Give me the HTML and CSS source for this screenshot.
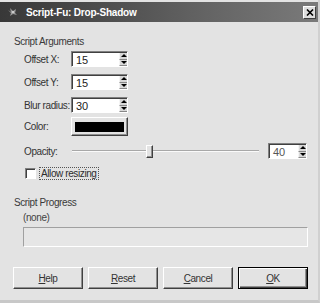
FILE: index.html
```html
<!DOCTYPE html>
<html lang="en">
<head>
    <meta charset="UTF-8">
    <title>Script-Fu: Drop-Shadow</title>
    <link rel="stylesheet" href="styles.css">
</head>
<body>
    <div class="window">
        <div class="titlebar">
            <span class="app-icon">
                <svg width="11" height="10" viewBox="0 0 11 10">
                    <path d="M1 3 L4 5 L3 1 L6 4 L9 2 L8 6 L10 8 L6 7 L3 9 L4 6 Z" fill="#9a9a9a"/>
                    <circle cx="6" cy="5" r="1" fill="#dcdcdc"/>
                </svg>
            </span>
            <span class="title">Script-Fu: Drop-Shadow</span>
            <span class="close">
                <svg width="8" height="7" viewBox="0 0 8 7">
                    <path d="M1 0.5 L7 6.5 M7 0.5 L1 6.5" stroke="#000" stroke-width="1.6"/>
                </svg>
            </span>
        </div>

        <div class="content">
            <div class="section-title">Script Arguments</div>
            <div class="args">
                <div class="row">
                    <label class="lbl">Offset X:</label>
                    <div class="spin">
                        <div class="spin-field">15</div>
                        <div class="spin-btns"><span class="up"></span><span class="down"></span></div>
                    </div>
                </div>
                <div class="row">
                    <label class="lbl">Offset Y:</label>
                    <div class="spin">
                        <div class="spin-field">15</div>
                        <div class="spin-btns"><span class="up"></span><span class="down"></span></div>
                    </div>
                </div>
                <div class="row">
                    <label class="lbl">Blur radius:</label>
                    <div class="spin">
                        <div class="spin-field">30</div>
                        <div class="spin-btns"><span class="up"></span><span class="down"></span></div>
                    </div>
                </div>
                <div class="row row-color">
                    <label class="lbl">Color:</label>
                    <div class="color-btn"><span class="swatch"></span></div>
                </div>
                <div class="row">
                    <label class="lbl">Opacity:</label>
                    <div class="slider">
                        <div class="groove"></div>
                        <div class="thumb"></div>
                    </div>
                    <div class="spin spin-small">
                        <div class="spin-field">40</div>
                        <div class="spin-btns"><span class="up"></span><span class="down"></span></div>
                    </div>
                </div>
                <div class="row row-check">
                    <span class="checkbox"></span>
                    <span class="check-label">Allow resizing</span>
                </div>
            </div>

            <div class="section-title progress-title">Script Progress</div>
            <div class="progress-text">(none)</div>
            <div class="progress-bar"></div>

            <div class="buttons">
                <div class="btn"><u>H</u>elp</div>
                <div class="btn"><u>R</u>eset</div>
                <div class="btn"><u>C</u>ancel</div>
                <div class="btn btn-default"><u>O</u>K</div>
            </div>
        </div>
    </div>
</body>
</html>
```

FILE: styles.css
```css
body {
    margin: 0;
    font-family: "Liberation Sans", Arial, sans-serif;
    font-size: 10px;
    letter-spacing: -0.4px;
    color: #2c2c2c;
    background: #e3e3e3;
}
.window {
    width: 320px;
    height: 303px;
    box-sizing: border-box;
    padding-top: 2px;
    border-right: 2px solid #d0d0d0;
    border-bottom: 3px solid #c8c8c8;
    background: #e3e3e3;
    display: flex;
    flex-direction: column;
}
.titlebar {
    height: 20px;
    display: flex;
    align-items: center;
    background: linear-gradient(90deg, #383838 0%, #4f4f4f 35%, #646464 65%, #7a7a7a 100%);
}
.app-icon {
    display: flex;
    margin-left: 7px;
    width: 11px;
    height: 10px;
}
.title {
    margin-left: 8px;
    color: #fff;
    font-weight: bold;
    font-size: 10px;
    letter-spacing: -0.2px;
    flex: 1;
}
.close {
    width: 13px;
    height: 13px;
    margin-right: 2px;
    background: #dedede;
    border: 1px solid;
    border-color: #fff #404040 #404040 #fff;
    box-sizing: border-box;
    display: flex;
    align-items: center;
    justify-content: center;
}
.content {
    display: flex;
    flex-direction: column;
}
.section-title {
    margin: 13px 0 0 14px;
    line-height: 13px;
    color: #3a3a3a;
}
.args {
    display: flex;
    flex-direction: column;
    padding-left: 24px;
    margin-top: 3px;
}
.row {
    display: flex;
    align-items: center;
    height: 16px;
    margin-top: 7px;
}
.row:first-child {
    margin-top: 0;
}
.lbl {
    width: 47px;
    flex-shrink: 0;
    white-space: nowrap;
    color: #333;
}
.spin {
    display: flex;
    height: 16px;
    box-sizing: border-box;
    border: 1px solid;
    border-color: #808080 #fff #fff #808080;
    background: #fff;
}
.spin-field {
    width: 47px;
    box-sizing: border-box;
    padding-left: 3px;
    line-height: 14px;
    font-size: 11px;
    letter-spacing: 0;
    border-top: 1px solid #404040;
    border-left: 1px solid #404040;
    color: #222;
}
.spin-btns {
    width: 8px;
    display: flex;
    flex-direction: column;
    background: #d8d8d8;
    border-top: 1px solid #404040;
}
.spin-btns span {
    flex: 1;
    display: flex;
    align-items: center;
    justify-content: center;
    border-left: 1px solid #f4f4f4;
    border-bottom: 1px solid #888;
}
.spin-btns .up::after {
    content: "";
    border-left: 3px solid transparent;
    border-right: 3px solid transparent;
    border-bottom: 3px solid #000;
}
.spin-btns .down::after {
    content: "";
    border-left: 3px solid transparent;
    border-right: 3px solid transparent;
    border-top: 3px solid #000;
}
.row-color {
    height: 19px;
    margin-top: 4px;
}
.color-btn {
    width: 57px;
    height: 19px;
    box-sizing: border-box;
    border: 1px solid;
    border-color: #fff #404040 #404040 #fff;
    box-shadow: inset -1px -1px 0 #909090;
    display: flex;
    align-items: center;
    justify-content: center;
    padding-top: 1px;
}
.swatch {
    width: 49px;
    height: 10px;
    background: #000;
}
.slider {
    position: relative;
    width: 187px;
    height: 16px;
    margin-left: 1px;
}
.groove {
    position: absolute;
    left: 0;
    right: 0;
    top: 7px;
    border-top: 1px solid #a8a8a8;
    border-bottom: 1px solid #fafafa;
}
.thumb {
    position: absolute;
    left: 74px;
    top: 2px;
    width: 7px;
    height: 13px;
    box-sizing: border-box;
    background: #e3e3e3;
    border: 1px solid;
    border-color: #fff #404040 #404040 #fff;
    box-shadow: inset -1px -1px 0 #909090;
}
.spin-small {
    margin-left: 9px;
}
.spin-small .spin-field {
    width: 29px;
    color: #555;
}
.row-check {
    height: 12px;
    margin-top: 8px;
}
.checkbox {
    width: 11px;
    height: 11px;
    margin-left: 1px;
    box-sizing: border-box;
    background: #fff;
    border: 1px solid;
    border-color: #808080 #fff #fff #808080;
    box-shadow: inset 1px 1px 0 #404040;
}
.check-label {
    margin-left: 3px;
    padding: 0 1px;
    line-height: 11px;
    border: 1px dotted #555;
}
.progress-title {
    margin-top: 17px;
}
.progress-text {
    margin: 2px 0 0 23px;
    line-height: 13px;
    color: #444;
}
.progress-bar {
    margin: 3px 0 0 23px;
    width: 285px;
    height: 20px;
    box-sizing: border-box;
    border: 1px solid;
    border-color: #a0a0a0 #fff #fff #a0a0a0;
    background: #e6e6e6;
}
.buttons {
    display: flex;
    gap: 5px;
    margin: 20px 0 0 13px;
}
.btn {
    width: 70px;
    height: 22px;
    box-sizing: border-box;
    border: 1px solid;
    border-color: #fff #404040 #404040 #fff;
    box-shadow: inset -1px -1px 0 #909090;
    display: flex;
    align-items: center;
    justify-content: center;
    color: #333;
}
.btn-default {
    border-color: #000;
    box-shadow: inset 1px 1px 0 #fff, inset -1px -1px 0 #404040, inset -2px -2px 0 #909090;
}
```
